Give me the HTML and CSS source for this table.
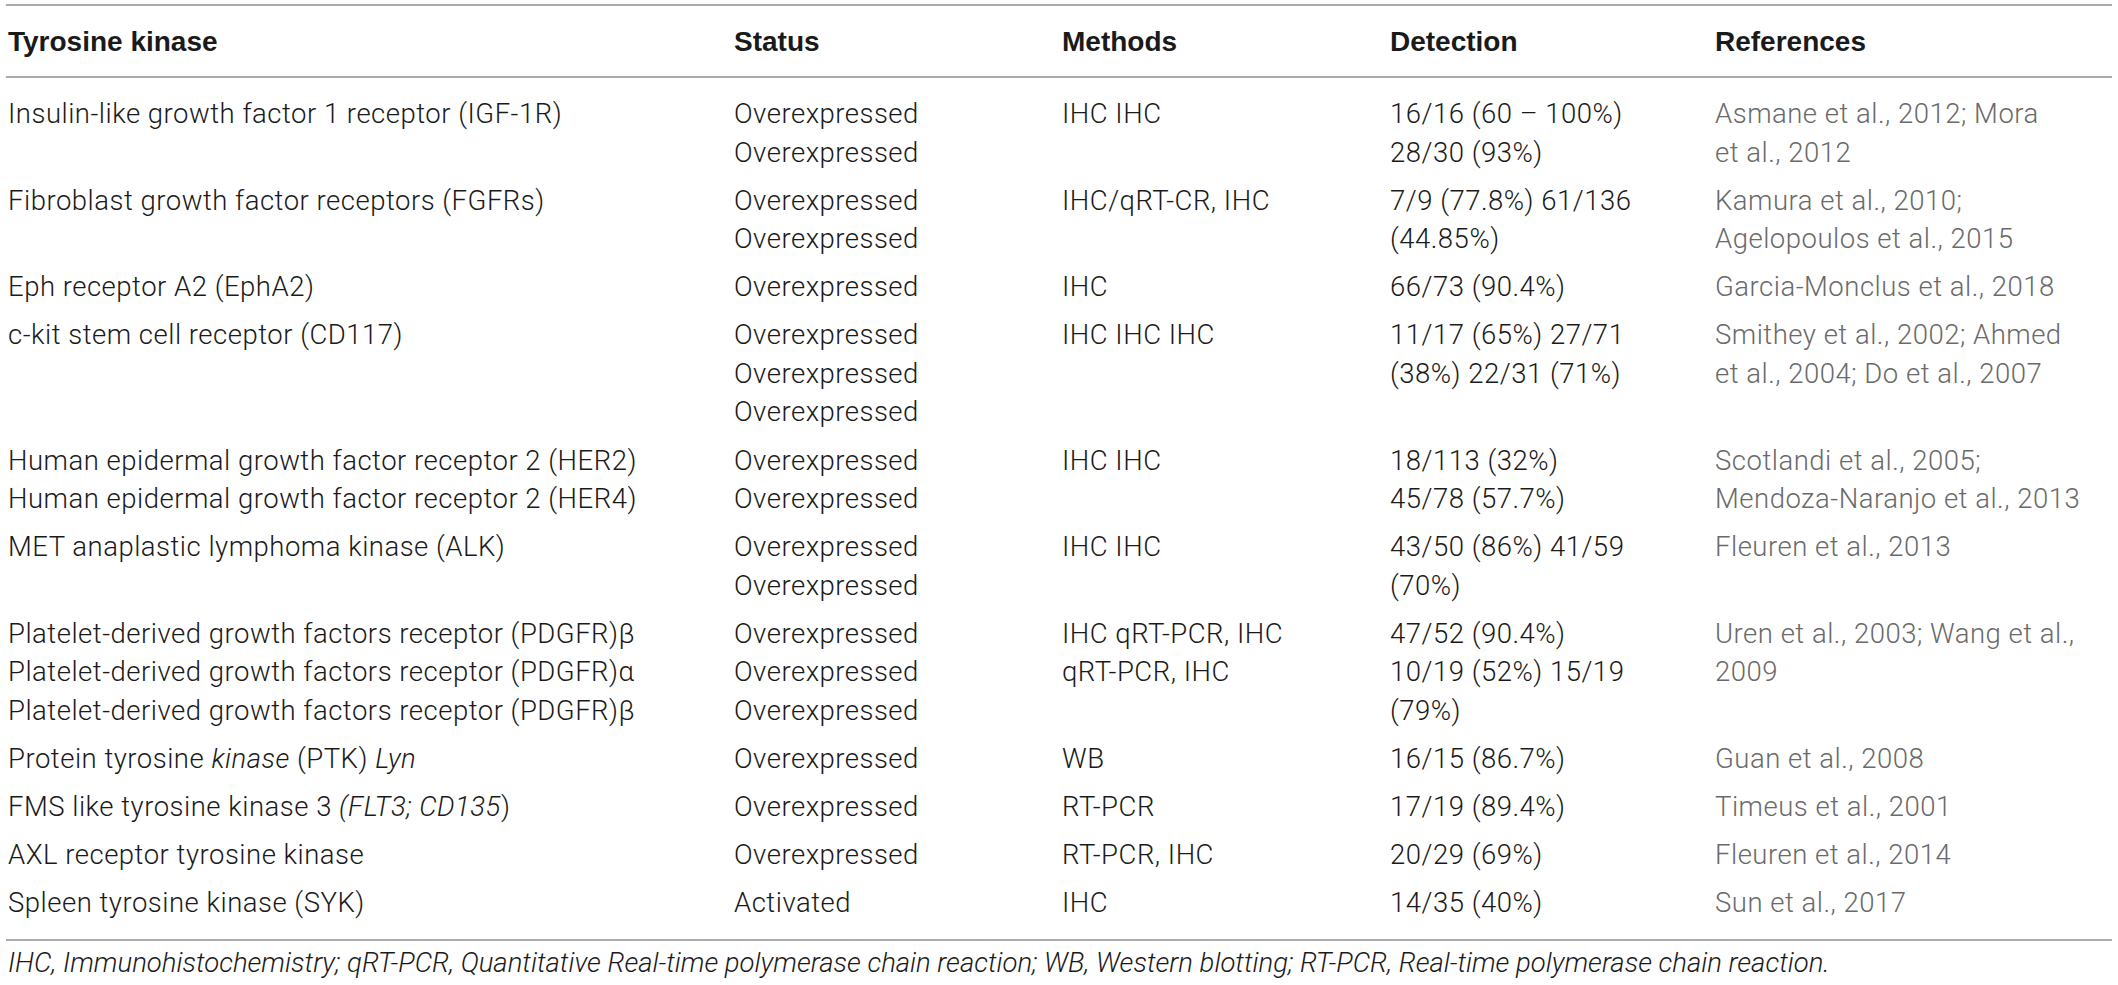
FILE: index.html
```html
<!DOCTYPE html>
<html lang="en">
<head>
<meta charset="utf-8">
<title>Tyrosine kinases</title>
<link rel="stylesheet" href="styles.css">
</head>
<body>
<div class="wrap">
  <table class="kt">
    <colgroup>
      <col class="c1"><col class="c2"><col class="c3"><col class="c4"><col class="c5">
    </colgroup>
    <thead>
      <tr>
        <th>Tyrosine kinase</th>
        <th>Status</th>
        <th>Methods</th>
        <th>Detection</th>
        <th>References</th>
      </tr>
    </thead>
    <tbody>
      <tr>
        <td>Insulin-like growth factor 1 receptor (IGF-1R)</td>
        <td>Overexpressed<br>Overexpressed</td>
        <td>IHC IHC</td>
        <td>16/16 (60 – 100%)<br>28/30 (93%)</td>
        <td class="ref">Asmane et al., 2012; Mora<br>et al., 2012</td>
      </tr>
      <tr>
        <td>Fibroblast growth factor receptors (FGFRs)</td>
        <td>Overexpressed<br>Overexpressed</td>
        <td>IHC/qRT-CR, IHC</td>
        <td>7/9 (77.8%) 61/136<br>(44.85%)</td>
        <td class="ref">Kamura et al., 2010;<br>Agelopoulos et al., 2015</td>
      </tr>
      <tr>
        <td>Eph receptor A2 (EphA2)</td>
        <td>Overexpressed</td>
        <td>IHC</td>
        <td>66/73 (90.4%)</td>
        <td class="ref">Garcia-Monclus et al., 2018</td>
      </tr>
      <tr>
        <td>c-kit stem cell receptor (CD117)</td>
        <td>Overexpressed<br>Overexpressed<br>Overexpressed</td>
        <td>IHC IHC IHC</td>
        <td>11/17 (65%) 27/71<br>(38%) 22/31 (71%)</td>
        <td class="ref">Smithey et al., 2002; Ahmed<br>et al., 2004; Do et al., 2007</td>
      </tr>
      <tr>
        <td>Human epidermal growth factor receptor 2 (HER2)<br>Human epidermal growth factor receptor 2 (HER4)</td>
        <td>Overexpressed<br>Overexpressed</td>
        <td>IHC IHC</td>
        <td>18/113 (32%)<br>45/78 (57.7%)</td>
        <td class="ref">Scotlandi et al., 2005;<br>Mendoza-Naranjo et al., 2013</td>
      </tr>
      <tr>
        <td>MET anaplastic lymphoma kinase (ALK)</td>
        <td>Overexpressed<br>Overexpressed</td>
        <td>IHC IHC</td>
        <td>43/50 (86%) 41/59<br>(70%)</td>
        <td class="ref">Fleuren et al., 2013</td>
      </tr>
      <tr>
        <td>Platelet-derived growth factors receptor (PDGFR)β<br>Platelet-derived growth factors receptor (PDGFR)α<br>Platelet-derived growth factors receptor (PDGFR)β</td>
        <td>Overexpressed<br>Overexpressed<br>Overexpressed</td>
        <td>IHC qRT-PCR, IHC<br>qRT-PCR, IHC</td>
        <td>47/52 (90.4%)<br>10/19 (52%) 15/19<br>(79%)</td>
        <td class="ref">Uren et al., 2003; Wang et al.,<br>2009</td>
      </tr>
      <tr>
        <td>Protein tyrosine <i>kinase</i> (PTK) <i>Lyn</i></td>
        <td>Overexpressed</td>
        <td>WB</td>
        <td>16/15 (86.7%)</td>
        <td class="ref">Guan et al., 2008</td>
      </tr>
      <tr>
        <td>FMS like tyrosine kinase 3 <i>(FLT3; CD135</i>)</td>
        <td>Overexpressed</td>
        <td>RT-PCR</td>
        <td>17/19 (89.4%)</td>
        <td class="ref">Timeus et al., 2001</td>
      </tr>
      <tr>
        <td>AXL receptor tyrosine kinase</td>
        <td>Overexpressed</td>
        <td>RT-PCR, IHC</td>
        <td>20/29 (69%)</td>
        <td class="ref">Fleuren et al., 2014</td>
      </tr>
      <tr>
        <td>Spleen tyrosine kinase (SYK)</td>
        <td>Activated</td>
        <td>IHC</td>
        <td>14/35 (40%)</td>
        <td class="ref">Sun et al., 2017</td>
      </tr>
    </tbody>
  </table>
  <p class="note">IHC, Immunohistochemistry; qRT-PCR, Quantitative Real-time polymerase chain reaction; WB, Western blotting; RT-PCR, Real-time polymerase chain reaction.</p>
</div>
</body>
</html>
```

FILE: styles.css
```css
html, body {
  margin: 0;
  padding: 0;
  background: #ffffff;
}

.wrap {
  padding: 4px 6px 0 6px;
  width: 2106px;
  font-family: Roboto, "Liberation Sans", Arial, sans-serif;
  font-weight: 300;
  color: #1a1a1a;
}

.kt {
  width: 2106px;
  border-collapse: collapse;
  table-layout: fixed;
  border-top: 2px solid #ababab;
  border-bottom: 2px solid #ababab;
}

.c1 { width: 726px; }
.c2 { width: 328px; }
.c3 { width: 328px; }
.c4 { width: 325px; }
.c5 { width: 399px; }

.kt th {
  font-family: "Liberation Sans", Arial, sans-serif;
  font-weight: 700;
  font-size: 28px;
  line-height: 38.5px;
  text-align: left;
  color: #1a1a1a;
  padding: 17px 0 14px 2px;
  border-bottom: 2px solid #ababab;
  white-space: nowrap;
}

.kt td {
  font-size: 27.5px;
  line-height: 38.5px;
  letter-spacing: 0.5px;
  vertical-align: top;
  text-align: left;
  padding: 4.8px 0 4.8px 2px;
  white-space: nowrap;
}

.kt tbody tr:first-child td {
  padding-top: 17.7px;
}

.kt tbody tr:last-child td {
  padding-bottom: 16.7px;
}

.kt td.ref {
  color: #6a6a6a;
}

.kt i {
  font-style: italic;
}

.note {
  margin: 3px 0 0 0;
  padding-left: 2px;
  font-size: 27.5px;
  line-height: 38.5px;
  font-style: italic;
  white-space: nowrap;
}
```
